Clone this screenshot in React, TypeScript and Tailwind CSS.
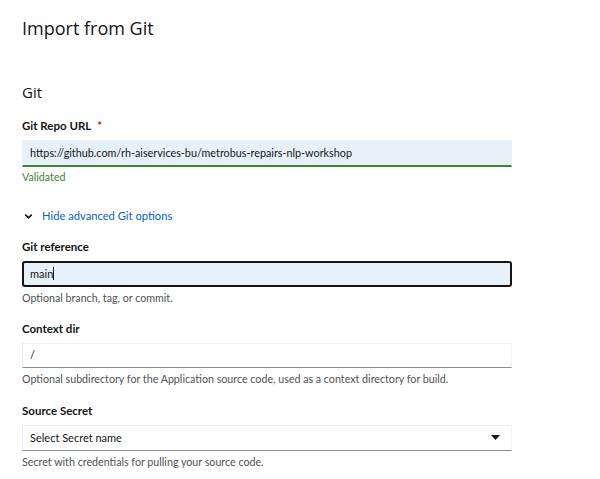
import { ChevronDown } from "lucide-react";

const font = { fontFamily: 'Lato, "Open Sans", "Liberation Sans", sans-serif' };
const titleFont = { fontFamily: '"Open Sans", "Liberation Sans", sans-serif' };

function Label({ text, required }: { text: string; required?: boolean }) {
    return (
        <div className="text-[11.5px] font-bold text-[#151515] leading-[14px] mb-[7px]">
            {text}
            {required && <span className="text-[#c9190b] ml-[6px]">*</span>}
        </div>
    );
}

function Helper({ text, green }: { text: string; green?: boolean }) {
    return (
        <div className={green ? "text-[10.7px] text-[#3e8635] mt-[3px] leading-[14px]" : "text-[10.7px] text-[#4f5255] mt-[4px] leading-[14px]"}>
            {text}
        </div>
    );
}

export default function App() {
    return (
        <div className="w-[600px] h-[479px] bg-white overflow-hidden" style={font}>
            <div className="px-[22px] pt-[16px]">
                <h1 className="text-[18px] text-[#151515] leading-[24px]" style={titleFont}>Import from Git</h1>

                <div className="w-[490px]">
                    <h2 className="text-[15px] text-[#151515] leading-[20px] mt-[42px] mb-[17px]" style={titleFont}>Git</h2>

                    <Label text="Git Repo URL" required />
                    <div className="h-[27px] bg-[#e7f1fa] border-t border-x border-[#f0f0f0] border-b-2 border-b-[#3e8635] flex items-center px-[7px] text-[10.8px] text-[#151515]">
                        https://github.com/rh-aiservices-bu/metrobus-repairs-nlp-workshop
                    </div>
                    <Helper text="Validated" green />

                    <div className="flex items-center mt-[24px] text-[11.2px] text-[#0066cc]">
                        <ChevronDown className="w-[11px] h-[11px] text-[#151515] ml-[1px] mr-[8px]" strokeWidth={3.5} />
                        Hide advanced Git options
                    </div>

                    <div className="mt-[15px]">
                        <Label text="Git reference" />
                        <div className="h-[26px] bg-[#e7f1fa] border-2 border-[#151515] rounded-[3px] flex items-center px-[6px] text-[11px] text-[#151515]">
                            main<span className="inline-block w-px h-[13px] bg-[#151515]" />
                        </div>
                        <Helper text="Optional branch, tag, or commit." />
                    </div>

                    <div className="mt-[17px]">
                        <Label text="Context dir" />
                        <div className="h-[25px] bg-white border-t border-x border-[#f0f0f0] border-b border-b-[#8a8d90] flex items-center px-[7px] text-[11px] text-[#151515]">
                            /
                        </div>
                        <Helper text="Optional subdirectory for the Application source code, used as a context directory for build." />
                    </div>

                    <div className="mt-[18px]">
                        <Label text="Source Secret" />
                        <div className="h-[26px] bg-white border-t border-x border-[#f0f0f0] border-b border-b-[#8a8d90] flex items-center justify-between pl-[7px] pr-[11px] text-[11px] text-[#151515]">
                            <span>Select Secret name</span>
                            <svg width="9" height="5" viewBox="0 0 9 5"><path d="M0 0h9L4.5 5z" fill="#151515" /></svg>
                        </div>
                        <Helper text="Secret with credentials for pulling your source code." />
                    </div>
                </div>
            </div>
        </div>
    );
}
